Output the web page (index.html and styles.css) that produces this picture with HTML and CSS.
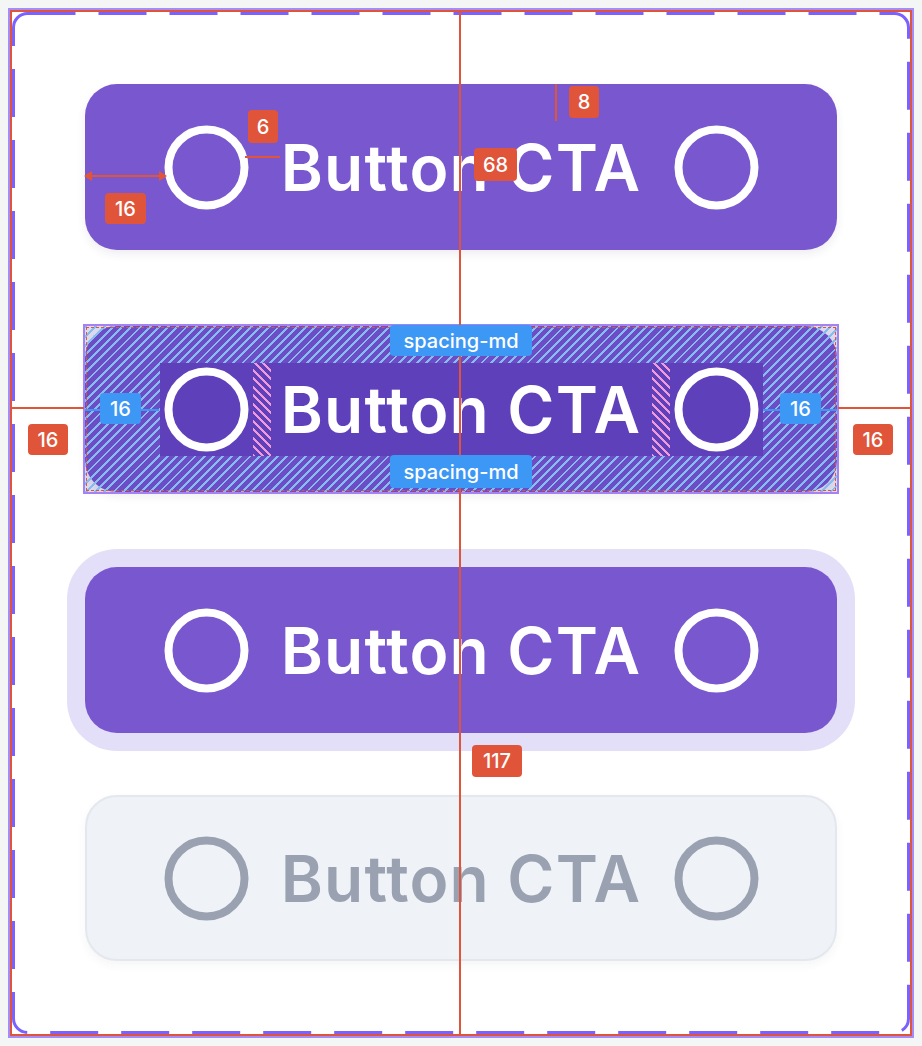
FILE: index.html
```html
<!DOCTYPE html>
<html lang="en">
<head>
<meta charset="utf-8">
<title>Button CTA spec</title>
<link rel="stylesheet" href="styles.css">
</head>
<body>
<div class="frame">
  <div class="canvas">
    <svg class="dash-border" width="898" height="1022" viewBox="0 0 898 1022" aria-hidden="true">
      <rect x="1.5" y="1.5" width="895" height="1019" rx="14" ry="14" fill="none" stroke="#7b61ff" stroke-width="3" stroke-dasharray="48 23" stroke-dashoffset="0"/>
    </svg>

    <div class="btn">
      <div class="row">
        <span class="icon"><svg width="93" height="93" viewBox="0 0 93 93"><circle cx="46.5" cy="46.5" r="38" fill="none" stroke="currentColor" stroke-width="8"/></svg></span>
        <span class="spacer"></span>
        <span class="text">Button CTA</span>
        <span class="spacer"></span>
        <span class="icon"><svg width="93" height="93" viewBox="0 0 93 93"><circle cx="46.5" cy="46.5" r="38" fill="none" stroke="currentColor" stroke-width="8"/></svg></span>
      </div>
    </div>

    <div class="btn btn-inspect">
      <div class="hatch"></div>
      <div class="row">
        <span class="icon"><svg width="93" height="93" viewBox="0 0 93 93"><circle cx="46.5" cy="46.5" r="38" fill="none" stroke="currentColor" stroke-width="8"/></svg></span>
        <span class="spacer"></span>
        <span class="text">Button CTA</span>
        <span class="spacer"></span>
        <span class="icon"><svg width="93" height="93" viewBox="0 0 93 93"><circle cx="46.5" cy="46.5" r="38" fill="none" stroke="currentColor" stroke-width="8"/></svg></span>
      </div>
      <span class="bline bline-left"></span>
      <span class="bline bline-right"></span>
      <span class="tag tag-blue pad-left">16</span>
      <span class="tag tag-blue pad-right">16</span>
      <span class="tag tag-blue pad-top">spacing-md</span>
      <span class="tag tag-blue pad-bottom">spacing-md</span>
    </div>

    <div class="btn btn-focus">
      <div class="row">
        <span class="icon"><svg width="93" height="93" viewBox="0 0 93 93"><circle cx="46.5" cy="46.5" r="38" fill="none" stroke="currentColor" stroke-width="8"/></svg></span>
        <span class="spacer"></span>
        <span class="text">Button CTA</span>
        <span class="spacer"></span>
        <span class="icon"><svg width="93" height="93" viewBox="0 0 93 93"><circle cx="46.5" cy="46.5" r="38" fill="none" stroke="currentColor" stroke-width="8"/></svg></span>
      </div>
    </div>

    <div class="btn btn-disabled">
      <div class="row">
        <span class="icon"><svg width="93" height="93" viewBox="0 0 93 93"><circle cx="46.5" cy="46.5" r="38" fill="none" stroke="currentColor" stroke-width="8"/></svg></span>
        <span class="spacer"></span>
        <span class="text">Button CTA</span>
        <span class="spacer"></span>
        <span class="icon"><svg width="93" height="93" viewBox="0 0 93 93"><circle cx="46.5" cy="46.5" r="38" fill="none" stroke="currentColor" stroke-width="8"/></svg></span>
      </div>
    </div>

    <!-- measurement overlays -->
    <span class="rline rline-v"></span>
    <span class="rline rline-h-left"></span>
    <span class="rline rline-h-right"></span>
    <span class="rline rline-six"></span>
    <span class="rline rline-eight"></span>
    <svg class="arrow" width="83" height="14" viewBox="0 0 83 14" aria-hidden="true">
      <line x1="6" y1="7" x2="77" y2="7" stroke="#e0553a" stroke-width="2"/>
      <polygon points="0,7 8,2 8,12" fill="#e0553a"/>
      <polygon points="83,7 75,2 75,12" fill="#e0553a"/>
    </svg>
    <span class="tag tag-red t-six">6</span>
    <span class="tag tag-red t-eight">8</span>
    <span class="tag tag-red t-sixtyeight">68</span>
    <span class="tag tag-red t-arrow">16</span>
    <span class="tag tag-red t-left">16</span>
    <span class="tag tag-red t-right">16</span>
    <span class="tag tag-red t-117">117</span>
  </div>
</div>
</body>
</html>
```

FILE: styles.css
```css
html, body {
  margin: 0;
}
body {
  background: #f4f6f6;
  padding: 8px;
  font-family: Inter, "Noto Sans", sans-serif;
}
.frame {
  box-sizing: border-box;
  height: 1030px;
  border: 2px solid #a48df9;
}
.canvas {
  box-sizing: border-box;
  position: relative;
  height: 100%;
  border: 2px solid #e0553a;
  background: #ffffff;
  display: flex;
  flex-direction: column;
  align-items: center;
  padding-top: 72px;
}
.dash-border {
  position: absolute;
  left: 0;
  top: 0;
}

/* buttons */
.btn {
  box-sizing: border-box;
  position: relative;
  width: 752px;
  height: 166px;
  border-radius: 32px;
  background: #7857cf;
  color: #ffffff;
  display: flex;
  align-items: center;
  justify-content: center;
  box-shadow: 0 4px 10px rgba(40, 30, 80, 0.08);
  flex-shrink: 0;
}
.btn + .btn {
  margin-top: 76px;
}
.btn.btn-focus {
  margin-top: 75px;
  box-shadow: 0 0 0 18px #e4dff9;
}
.btn.btn-disabled {
  margin-top: 62px;
  background: #eff2f7;
  border: 2px solid #e4e8ee;
  color: #9aa1b1;
  box-shadow: 0 4px 10px rgba(40, 50, 80, 0.05);
}
.row {
  position: relative;
  z-index: 1;
  display: flex;
  align-items: center;
  height: 93px;
}
.icon {
  display: flex;
  width: 93px;
  height: 93px;
}
.spacer {
  width: 18px;
  height: 93px;
}
.text {
  width: 381px;
  text-align: center;
  font-size: 64px;
  font-weight: 600;
  line-height: 93px;
  letter-spacing: 1.2px;
  white-space: nowrap;
}

/* inspected button */
.hatch {
  position: absolute;
  inset: -2px;
  border: 2px solid #a382f6;
  background:
    repeating-linear-gradient(135deg, #86bdf0 0 2px, rgba(50, 25, 150, 0.16) 2px 6.5px);
  outline: 1px dashed #e0553a;
  outline-offset: -4px;
  z-index: 0;
}
.btn-inspect .row {
  background: #5f40bb;
}
.btn-inspect .spacer {
  background: repeating-linear-gradient(45deg, #f19ad9 0 2px, #5f40bb 2px 6px);
}
.bline {
  position: absolute;
  top: 83px;
  height: 2px;
  background: #3d97f5;
  z-index: 1;
}
.bline-left {
  left: 0;
  width: 74px;
}
.bline-right {
  right: 0;
  width: 74px;
}

/* tags */
.tag {
  position: absolute;
  z-index: 3;
  display: flex;
  align-items: center;
  justify-content: center;
  box-sizing: border-box;
  height: 31px;
  padding: 0 7px;
  border-radius: 4px;
  color: #ffffff;
  font-size: 20px;
  font-weight: 500;
  line-height: 1;
  white-space: nowrap;
}
.tag-red {
  background: #e0553a;
}
.tag-blue {
  background: #3d97f5;
}
.pad-left {
  left: 15px;
  top: 67px;
  width: 41px;
}
.pad-right {
  right: 16px;
  top: 67px;
  width: 41px;
}
.pad-top {
  left: 305px;
  top: -1px;
  width: 142px;
}
.pad-bottom {
  left: 305px;
  top: 129px;
  width: 142px;
  height: 33px;
}

/* red measurement lines */
.rline {
  position: absolute;
  background: #e0553a;
  z-index: 2;
}
.rline-v {
  left: 447px;
  top: -2px;
  bottom: -2px;
  width: 2px;
}
.rline-h-left {
  left: 0;
  top: 395px;
  width: 72px;
  height: 2px;
}
.rline-h-right {
  left: 826px;
  top: 395px;
  width: 72px;
  height: 2px;
}
.rline-six {
  left: 233px;
  top: 144px;
  width: 35px;
  height: 2px;
}
.rline-eight {
  left: 543px;
  top: 72px;
  width: 2px;
  height: 37px;
}
.arrow {
  position: absolute;
  left: 72px;
  top: 157px;
  z-index: 2;
}
.t-six {
  left: 236px;
  top: 98px;
  width: 30px;
  height: 33px;
}
.t-eight {
  left: 557px;
  top: 74px;
  width: 30px;
  height: 32px;
}
.t-sixtyeight {
  left: 462px;
  top: 136px;
  width: 43px;
  height: 33px;
}
.t-arrow {
  left: 93px;
  top: 181px;
  width: 41px;
}
.t-left {
  left: 16px;
  top: 412px;
  width: 40px;
}
.t-right {
  left: 841px;
  top: 412px;
  width: 40px;
}
.t-117 {
  left: 460px;
  top: 733px;
  width: 50px;
  height: 32px;
}
```
